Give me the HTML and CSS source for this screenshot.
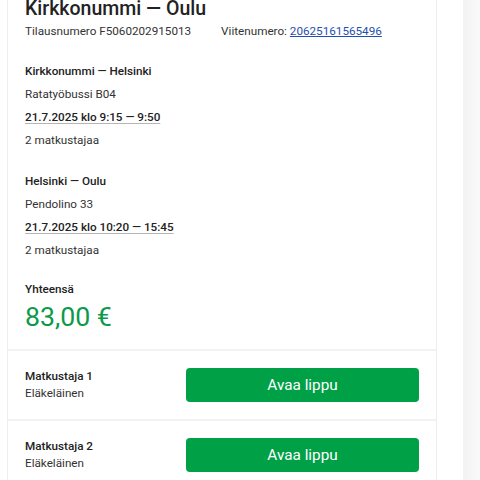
FILE: index.html
```html
<!DOCTYPE html>
<html lang="fi">
<head>
<meta charset="utf-8">
<link rel="stylesheet" href="styles.css">
</head>
<body>
<div class="page">
  <div class="card">
    <div class="summary">
      <h1 class="title">Kirkkonummi — Oulu</h1>
      <div class="order">
        <span>Tilausnumero F5060202915013</span>
        <span>Viitenumero: <a class="ref" href="#">20625161565496</a></span>
      </div>
      <div class="leg first">
        <div class="leg-route">Kirkkonummi — Helsinki</div>
        <div class="line">Ratatyöbussi B04</div>
        <div class="line strong"><span class="time">21.7.2025 klo 9:15 — 9:50</span></div>
        <div class="line">2 matkustajaa</div>
      </div>
      <div class="leg">
        <div class="leg-route">Helsinki — Oulu</div>
        <div class="line">Pendolino 33</div>
        <div class="line strong"><span class="time">21.7.2025 klo 10:20 — 15:45</span></div>
        <div class="line">2 matkustajaa</div>
      </div>
      <div class="total">
        <div class="total-label">Yhteensä</div>
        <div class="price">83,00 €</div>
      </div>
    </div>
    <div class="passenger">
      <div class="pinfo">
        <div class="pname">Matkustaja 1</div>
        <div class="ptype">Eläkeläinen</div>
      </div>
      <button class="open">Avaa lippu</button>
    </div>
    <div class="passenger">
      <div class="pinfo">
        <div class="pname">Matkustaja 2</div>
        <div class="ptype">Eläkeläinen</div>
      </div>
      <button class="open">Avaa lippu</button>
    </div>
  </div>
  <div class="side"></div>
</div>
</body>
</html>
```

FILE: styles.css
```css
html, body {
  margin: 0;
  padding: 0;
  background: #ffffff;
  overflow: hidden;
}
body {
  font-family: Roboto, "Liberation Sans", sans-serif;
  color: #262626;
  height: 480px;
}
.page {
  display: flex;
  height: 480px;
  padding-left: 7px;
}
.card {
  width: 428px;
  flex: none;
  border-left: 1px solid #ededed;
  border-right: 1px solid #ededed;
  margin-top: -3px;
}
.side {
  flex: 1;
  margin-left: 26px;
  background: linear-gradient(to right, #f2f2f2, #fafafa);
}
.summary {
  padding: 0 18px 14px 17px;
}
.title {
  margin: 0;
  font-size: 19.5px;
  line-height: 24px;
  font-weight: 500;
  color: #222;
  white-space: nowrap;
}
.order {
  display: flex;
  gap: 30px;
  font-size: 11.7px;
  line-height: 18px;
  margin-top: 1px;
  color: #333;
  white-space: nowrap;
}
.ref {
  color: #1f4fb0;
  text-decoration: underline;
}
.leg {
  margin-top: 18px;
  font-size: 11.7px;
  line-height: 23px;
  white-space: nowrap;
}
.leg.first {
  margin-top: 20px;
}
.leg-route {
  font-weight: 500;
  color: #222;
}
.line {
  color: #333;
}
.strong {
  font-weight: 500;
  color: #222;
}
.time {
  text-decoration: underline;
  text-decoration-color: #b5b5b5;
  text-underline-offset: 2px;
}
.total {
  margin-top: 17px;
}
.total-label {
  font-size: 11.7px;
  line-height: 20px;
  font-weight: 500;
  color: #222;
}
.price {
  font-size: 26.7px;
  line-height: 36px;
  color: #0b9a4a;
  font-weight: 400;
}
.passenger {
  display: flex;
  align-items: center;
  justify-content: space-between;
  border-top: 2px solid #f2f2f2;
  padding: 0 17px 0 17px;
  height: 68px;
}
.pname {
  font-size: 11.7px;
  font-weight: 500;
  line-height: 17px;
  color: #222;
}
.ptype {
  font-size: 11.7px;
  line-height: 17px;
  color: #333;
}
.open {
  width: 233px;
  height: 34px;
  border: none;
  border-radius: 4px;
  background: #00a046;
  color: #fff;
  font-family: Roboto, "Liberation Sans", sans-serif;
  font-size: 15.3px;
  font-weight: 400;
  padding: 0;
}
```
